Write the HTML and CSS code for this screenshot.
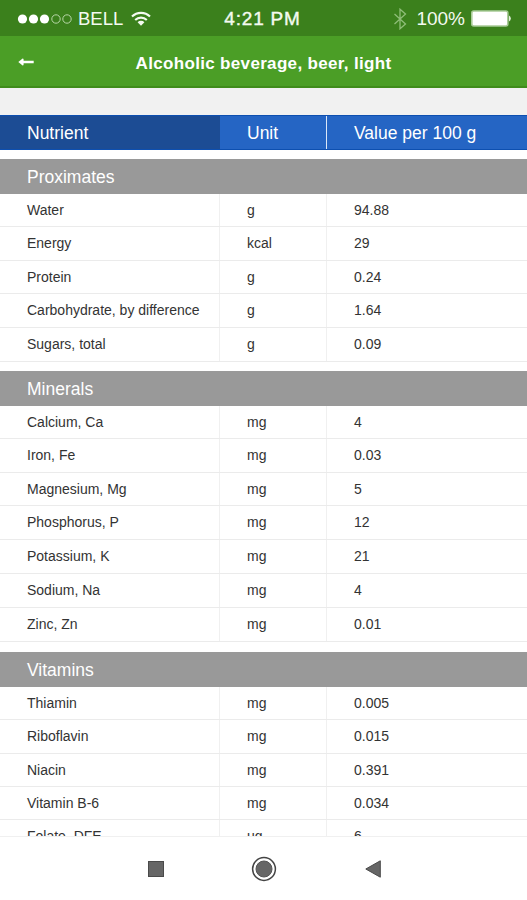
FILE: index.html
```html
<!DOCTYPE html>
<html lang="en">
<head>
    <meta charset="UTF-8">
    <meta name="viewport" content="width=device-width, initial-scale=1.0">
    <title>Alcoholic beverage, beer, light</title>
    <link rel="stylesheet" href="styles.css">
</head>
<body>
    <div class="status-bar">
        <div class="carrier">
            <svg class="signal" width="55" height="12" viewBox="0 0 55 12">
                <circle cx="5.5" cy="6" r="4.6" fill="#fff"/>
                <circle cx="16.5" cy="6" r="4.6" fill="#fff"/>
                <circle cx="27.5" cy="6" r="4.6" fill="#fff"/>
                <circle cx="39" cy="6" r="4.2" fill="none" stroke="#b7d6a8"/>
                <circle cx="50" cy="6" r="4.2" fill="none" stroke="#b7d6a8"/>
            </svg>
            <span class="carrier-name">BELL</span>
            <svg class="wifi" width="20" height="15" viewBox="0 0 20 15">
                <path d="M1 5.6a12.8 12.8 0 0 1 18 0M4.2 9a8.3 8.3 0 0 1 11.6 0" fill="none" stroke="#f4faf0" stroke-width="2.1"/>
                <path d="M6.6 11.2a4.8 4.8 0 0 1 6.8 0L10 14.8z" fill="#f4faf0"/>
            </svg>
        </div>
        <span class="clock">4:21 PM</span>
        <div class="power">
            <svg class="bluetooth" width="14" height="22" viewBox="0 0 14 22">
                <path d="M1.5 6l11 10L7 20.8V1.2L12.5 6l-11 10" fill="none" stroke="#8fbd78" stroke-width="1.3"/>
            </svg>
            <span class="percent">100%</span>
            <svg class="battery" width="40" height="17" viewBox="0 0 40 17">
                <rect x=".8" y="1" width="36" height="15" rx="2" fill="#fff" stroke="#a9cc98" stroke-width="1.6"/>
                <path d="M38 5.5q1.8 1 1.8 3t-1.8 3z" fill="#e3f0dc"/>
            </svg>
        </div>
    </div>

    <header>
        <svg class="back" width="16" height="8" viewBox="0 0 16 8">
            <path d="M.3 4L4.6 .5Q5.6 .5 5.6 1.5V2.8H15.7V5.2H5.6V6.5Q5.6 7.5 4.6 7.5z" fill="#fff"/>
        </svg>
        <h1>Alcoholic beverage, beer, light</h1>
    </header>

    <div id="main">
        <div class="row table-head">
            <div class="name">Nutrient</div>
            <div class="unit">Unit</div>
            <div class="value">Value per 100 g</div>
        </div>

        <h2>Proximates</h2>
        <div class="group">
            <div class="row"><div class="name">Water</div><div class="unit">g</div><div class="value">94.88</div></div>
            <div class="row"><div class="name">Energy</div><div class="unit">kcal</div><div class="value">29</div></div>
            <div class="row"><div class="name">Protein</div><div class="unit">g</div><div class="value">0.24</div></div>
            <div class="row"><div class="name">Carbohydrate, by difference</div><div class="unit">g</div><div class="value">1.64</div></div>
            <div class="row"><div class="name">Sugars, total</div><div class="unit">g</div><div class="value">0.09</div></div>
        </div>

        <h2>Minerals</h2>
        <div class="group minerals">
            <div class="row"><div class="name">Calcium, Ca</div><div class="unit">mg</div><div class="value">4</div></div>
            <div class="row"><div class="name">Iron, Fe</div><div class="unit">mg</div><div class="value">0.03</div></div>
            <div class="row"><div class="name">Magnesium, Mg</div><div class="unit">mg</div><div class="value">5</div></div>
            <div class="row"><div class="name">Phosphorus, P</div><div class="unit">mg</div><div class="value">12</div></div>
            <div class="row"><div class="name">Potassium, K</div><div class="unit">mg</div><div class="value">21</div></div>
            <div class="row"><div class="name">Sodium, Na</div><div class="unit">mg</div><div class="value">4</div></div>
            <div class="row"><div class="name">Zinc, Zn</div><div class="unit">mg</div><div class="value">0.01</div></div>
        </div>

        <h2>Vitamins</h2>
        <div class="group">
            <div class="row"><div class="name">Thiamin</div><div class="unit">mg</div><div class="value">0.005</div></div>
            <div class="row"><div class="name">Riboflavin</div><div class="unit">mg</div><div class="value">0.015</div></div>
            <div class="row"><div class="name">Niacin</div><div class="unit">mg</div><div class="value">0.391</div></div>
            <div class="row"><div class="name">Vitamin B-6</div><div class="unit">mg</div><div class="value">0.034</div></div>
            <div class="row"><div class="name">Folate, DFE</div><div class="unit">ug</div><div class="value">6</div></div>
        </div>
    </div>

    <footer>
        <svg width="16" height="16" viewBox="0 0 16 16">
            <rect x=".5" y=".5" width="15" height="15" fill="#666" stroke="#4a4a4a"/>
        </svg>
        <svg width="26" height="26" viewBox="0 0 26 26">
            <circle cx="13" cy="13" r="11.4" fill="none" stroke="#444" stroke-width="1.5"/>
            <circle cx="13" cy="13" r="8" fill="#666" stroke="#555"/>
        </svg>
        <svg width="16" height="18" viewBox="0 0 16 18">
            <path d="M.8 9L15.3 .8V17.2z" fill="#666" stroke="#4a4a4a"/>
        </svg>
    </footer>
</body>
</html>
```
FILE: styles.css
```css
* {
    box-sizing: border-box;
}

body {
    margin: 0;
    height: 900px;
    font-family: "Liberation Sans", Arial, sans-serif;
    background: #fff;
    color: #333;
    display: flex;
    flex-direction: column;
    overflow: hidden;
}

.status-bar {
    display: grid;
    grid-template-columns: 1fr auto 1fr;
    align-items: center;
    flex: none;
    height: 36px;
    padding: 1px 16px 0 17px;
    background-color: #3b801c;
    color: #f4faf0;
    font-size: 19px;
}

.carrier,
.power {
    display: flex;
    align-items: center;
}

.power {
    justify-content: flex-end;
}

.carrier-name {
    margin: 0 8px 0 6px;
    font-size: 18.5px;
}

.clock {
    margin-right: 3px;
    letter-spacing: 0.8px;
    -webkit-text-stroke: 0.4px #f4faf0;
}

.percent {
    margin: 0 6px 0 9px;
}

header {
    display: flex;
    align-items: center;
    flex: none;
    height: 52px;
    padding: 0 18px;
    background-color: #4b9e26;
    border-bottom: 2px solid #3f8c1b;
    color: white;
}

.back {
    margin-top: 2px;
}

h1 {
    flex: 1;
    margin: 0 16px 0 0;
    padding-top: 5px;
    font-size: 17px;
    letter-spacing: 0.33px;
    text-align: center;
}

#main {
    flex: none;
    height: 749px;
    padding-top: 27px;
    background: linear-gradient(#f1f1f1 27px, #fff 27px);
    border-bottom: 1px solid #f0f0f0;
    overflow: hidden;
}

.row {
    display: flex;
    height: 33.4px;
    border-bottom: 1px solid #ebebeb;
    font-size: 14px;
    line-height: 32px;
}

.name {
    width: 220px;
    padding-left: 27px;
    border-right: 1px solid #f0f0f0;
}

.unit {
    width: 107px;
    padding-left: 27px;
    border-right: 1px solid #f0f0f0;
}

.value {
    flex: 1;
    padding-left: 27px;
}

.table-head {
    height: 35px;
    margin-bottom: 9px;
    border-top: 1px solid #0d4fb0;
    border-bottom: 1px solid #0d4fb0;
    background-color: #2565c4;
    color: #fff;
    font-size: 17.5px;
    line-height: 35px;
}

.table-head .name {
    background-color: #1c4c94;
    border-right: none;
}

.table-head .unit {
    border-right-color: #dbe7f8;
}

h2 {
    height: 35px;
    margin: 0;
    padding-left: 27px;
    background-color: #999;
    color: #fff;
    font-size: 17.5px;
    font-weight: normal;
    line-height: 36px;
}

.group {
    padding-bottom: 9px;
}

/* last row of a group is slightly taller */
.group .row:last-child {
    height: 34.4px;
}

.minerals {
    padding-bottom: 10.4px;
}

.minerals .row:nth-child(n+5) {
    height: 34px;
}

footer {
    display: flex;
    align-items: center;
    justify-content: center;
    flex: 1;
    gap: 87.5px;
    padding-left: 1px;
}
```
